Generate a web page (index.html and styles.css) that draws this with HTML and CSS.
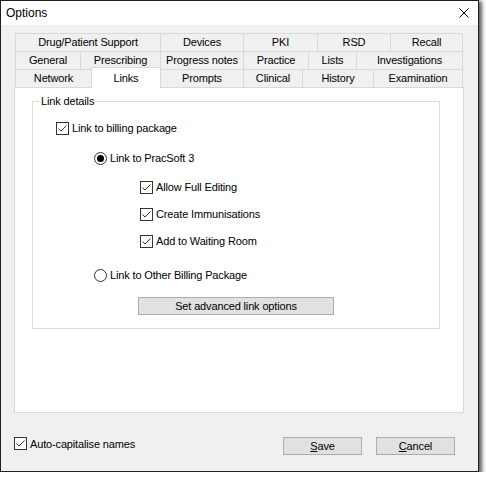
FILE: index.html
```html
<!DOCTYPE html>
<html lang="en">
<head>
    <meta charset="UTF-8">
    <title>Options</title>
    <link rel="stylesheet" href="styles.css">
</head>
<body>
    <div class="window">
        <div class="titlebar">
            <span class="title">Options</span>
            <svg class="close" width="10" height="10" viewBox="0 0 10 10">
                <path d="M0.5 0.5 L9.5 9.5 M9.5 0.5 L0.5 9.5" stroke="#000" stroke-width="1" fill="none"/>
            </svg>
        </div>
        <div class="content">
            <div class="tabs">
                <div class="tab-row row-1">
                    <div class="tab">Drug/Patient Support</div>
                    <div class="tab">Devices</div>
                    <div class="tab">PKI</div>
                    <div class="tab">RSD</div>
                    <div class="tab last">Recall</div>
                </div>
                <div class="tab-row row-2">
                    <div class="tab">General</div>
                    <div class="tab">Prescribing</div>
                    <div class="tab">Progress notes</div>
                    <div class="tab">Practice</div>
                    <div class="tab">Lists</div>
                    <div class="tab last">Investigations</div>
                </div>
                <div class="tab-row row-3">
                    <div class="tab">Network</div>
                    <div class="tab selected">Links</div>
                    <div class="tab">Prompts</div>
                    <div class="tab">Clinical</div>
                    <div class="tab">History</div>
                    <div class="tab last">Examination</div>
                </div>
            </div>

            <div class="panel">
                <div class="group">
                    <div class="group-title">Link details</div>

                    <div class="option opt-billing">
                        <span class="check on"></span>Link to billing package
                    </div>
                    <div class="option opt-pracsoft">
                        <span class="radio on"></span>Link to PracSoft 3
                    </div>
                    <div class="option sub opt-first">
                        <span class="check on"></span>Allow Full Editing
                    </div>
                    <div class="option sub opt-next">
                        <span class="check on"></span>Create Immunisations
                    </div>
                    <div class="option sub opt-next">
                        <span class="check on"></span>Add to Waiting Room
                    </div>
                    <div class="option opt-other">
                        <span class="radio"></span>Link to Other Billing Package
                    </div>
                    <button class="btn btn-advanced">Set advanced link options</button>
                </div>
            </div>

            <div class="footer">
                <div class="option">
                    <span class="check on"></span>Auto-capitalise names
                </div>
                <div class="footer-buttons">
                    <button class="btn"><u>S</u>ave</button>
                    <button class="btn"><u>C</u>ancel</button>
                </div>
            </div>
        </div>
    </div>
</body>
</html>
```

FILE: styles.css
```css
body {
    margin: 0;
    background: #fff;
    font-family: "Liberation Sans", Arial, sans-serif;
    font-size: 11px;
    letter-spacing: -0.15px;
    color: #000;
}

.window {
    width: 479px;
    height: 472px;
    box-sizing: border-box;
    border: 1px solid #1f1f1f;
    background: #f0f0f0;
    box-shadow: 2px 2px 4px 1px rgba(0, 0, 0, 0.65);
    display: flex;
    flex-direction: column;
}

.titlebar {
    height: 24px;
    background: #fff;
    display: flex;
    align-items: center;
    justify-content: space-between;
    padding: 0 9px 0 5px;
}

.title {
    font-size: 12px;
    letter-spacing: 0;
    line-height: 14px;
    margin-top: -1px;
}

.close {
    display: block;
    margin-top: -1px;
}

.content {
    padding: 8px 14px 0 13px;
}

/* tab strip */
.tabs {
    margin: 0 1px;
}

.tab-row {
    display: grid;
    height: 18px;
}

.row-1 { grid-template-columns: 145px 83px 74px 73px 73px; }
.row-2 { grid-template-columns: 65px 80px 83px 65px 48px 107px; }
.row-3 { grid-template-columns: 76px 69px 83px 59px 71px 90px; }

.tab {
    box-sizing: border-box;
    border-top: 1px solid #d9d9d9;
    border-left: 1px solid #d9d9d9;
    background: #f0f0f0;
    text-align: center;
    line-height: 16px;
    white-space: nowrap;
}

.tab.last {
    border-right: 1px solid #d9d9d9;
}

.tab.selected {
    position: relative;
    z-index: 1;
    margin: -2px -1px -1px 0;
    background: #fff;
    border-right: 1px solid #d9d9d9;
    padding-top: 2px;
}

.panel {
    height: 326px;
    box-sizing: border-box;
    border: 1px solid #d9d9d9;
    background: #fff;
    padding-top: 13px;
}

/* group box */
.group {
    width: 408px;
    box-sizing: border-box;
    margin-left: 17px;
    border: 1px solid #dcdcdc;
    padding-bottom: 13px;
}

.group-title {
    width: max-content;
    margin: -7px 0 0 6px;
    padding: 0 2px;
    background: #fff;
    line-height: 13px;
}

.option {
    display: flex;
    align-items: center;
    gap: 3px;
    height: 14px;
    white-space: nowrap;
}

.opt-billing { margin: 13px 0 0 23px; }
.opt-pracsoft { margin: 16px 0 0 61px; }
.sub { margin-left: 107px; }
.opt-first { margin-top: 15px; }
.opt-next { margin-top: 13px; }
.opt-other { margin: 20px 0 0 61px; }

.check {
    width: 13px;
    height: 13px;
    box-sizing: border-box;
    border: 1px solid #333;
    background: #fff;
    flex: none;
}

.check.on {
    background: #fff url("data:image/svg+xml;utf8,<svg xmlns='http://www.w3.org/2000/svg' width='11' height='11'><path d='M1.5 5.5 L4 8 L9.5 2.5' stroke='%23333' stroke-width='1' fill='none'/></svg>") no-repeat 0 0;
}

.radio {
    width: 13px;
    height: 13px;
    box-sizing: border-box;
    border: 1px solid #333;
    border-radius: 50%;
    background: #fff;
    flex: none;
    display: flex;
    align-items: center;
    justify-content: center;
}

.radio.on::after {
    content: "";
    width: 7px;
    height: 7px;
    border-radius: 50%;
    background: #000;
}

.btn {
    display: block;
    box-sizing: border-box;
    height: 18px;
    background: #e1e1e1;
    border: 1px solid #adadad;
    font-family: inherit;
    font-size: 11px;
    letter-spacing: inherit;
    color: #000;
    padding: 0;
}

.btn-advanced {
    width: 196px;
    margin: 15px 0 0 105px;
}

/* bottom row */
.footer {
    display: flex;
    align-items: flex-start;
    margin-top: 24px;
}

.footer .option {
    height: 13px;
}

.footer-buttons {
    display: flex;
    gap: 14px;
    margin-left: auto;
    margin-right: 9px;
}

.footer-buttons .btn {
    width: 79px;
}
```
